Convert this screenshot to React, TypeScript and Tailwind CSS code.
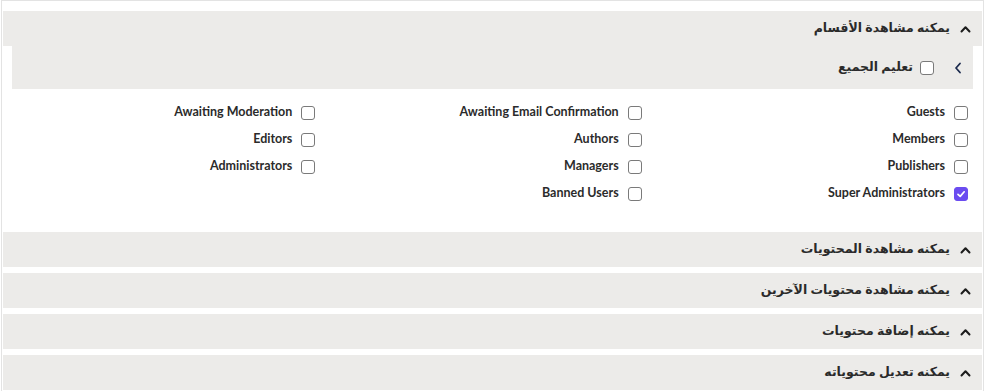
import React from "react";

const font = { fontFamily: '"Noto Sans", "DejaVu Sans", sans-serif' };
const latin = { fontFamily: 'Lato, "Noto Sans", sans-serif' };

function ChevronUp() {
  return (
    <svg width="11" height="8" viewBox="0 0 11 8" className="shrink-0">
      <path d="M1.5 6.5 L5.5 2.2 L9.5 6.5" fill="none" stroke="#1c1c1c" strokeWidth="2" strokeLinecap="round" strokeLinejoin="round" />
    </svg>
  );
}

function ChevronLeft() {
  return (
    <svg width="8" height="12" viewBox="0 0 8 12" className="shrink-0">
      <path d="M6 1.5 L2 6 L6 10.5" fill="none" stroke="#1b2a4e" strokeWidth="1.8" strokeLinecap="round" strokeLinejoin="round" />
    </svg>
  );
}

function Box({ checked = false }: { checked?: boolean }) {
  if (checked) {
    return (
      <span className="w-[14px] h-[14px] rounded-[3px] bg-[#6b4cf0] border border-[#6b4cf0] flex items-center justify-center shrink-0">
        <svg width="10" height="10" viewBox="0 0 10 10">
          <path d="M2 5.3 L4.2 7.4 L8.2 2.8" fill="none" stroke="#ffffff" strokeWidth="1.7" strokeLinecap="round" strokeLinejoin="round" />
        </svg>
      </span>
    );
  }
  return <span className="block w-[14px] h-[14px] rounded-[3px] border border-[#7a7a7a] bg-white shrink-0" />;
}

function Header({ title }: { title: string }) {
  return (
    <div className="h-[35px] bg-[#ecebe9] flex items-center gap-[10px] pr-[11px]">
      <ChevronUp />
      <span className="text-[12.5px] font-bold text-[#2a2a2a]">{title}</span>
    </div>
  );
}

const cols: [string, boolean][][] = [
  [["Guests", false], ["Members", false], ["Publishers", false], ["Super Administrators", true]],
  [["Awaiting Email Confirmation", false], ["Authors", false], ["Managers", false], ["Banned Users", false]],
  [["Awaiting Moderation", false], ["Editors", false], ["Administrators", false]],
];

export default function App() {
  return (
    <div dir="rtl" style={font} className="w-[984px] h-[391px] bg-white overflow-hidden pl-[1px]">
      <div className="h-[400px] border-t border-l border-r border-[#e3e3e3] pt-[10px] px-[1px]">
        <div>
          <Header title="يمكنه مشاهدة الأقسام" />
          <div className="mx-[9px] h-[43px] bg-[#ecebe9] flex items-center pr-[11px]">
            <ChevronLeft />
            <span className="mr-[20px]"><Box /></span>
            <span className="mr-[7px] text-[12.5px] font-bold text-[#2a2a2a]">تعليم الجميع</span>
          </div>
          <div className="grid grid-cols-3 pt-[10px] pb-[25px]">
            {cols.map((col, ci) => (
              <div key={ci} className="flex flex-col">
                {col.map(([label, checked]) => (
                  <div key={label} className="h-[27px] flex items-center pr-[14px] gap-[9px]">
                    <Box checked={checked} />
                    <span dir="ltr" style={latin} className="text-[12.5px] font-bold text-[#2b2b2b]">{label}</span>
                  </div>
                ))}
              </div>
            ))}
          </div>
        </div>
        <div className="flex flex-col gap-[6px]">
          <Header title="يمكنه مشاهدة المحتويات" />
          <Header title="يمكنه مشاهدة محتويات الآخرين" />
          <Header title="يمكنه إضافة محتويات" />
          <Header title="يمكنه تعديل محتوياته" />
        </div>
      </div>
    </div>
  );
}
